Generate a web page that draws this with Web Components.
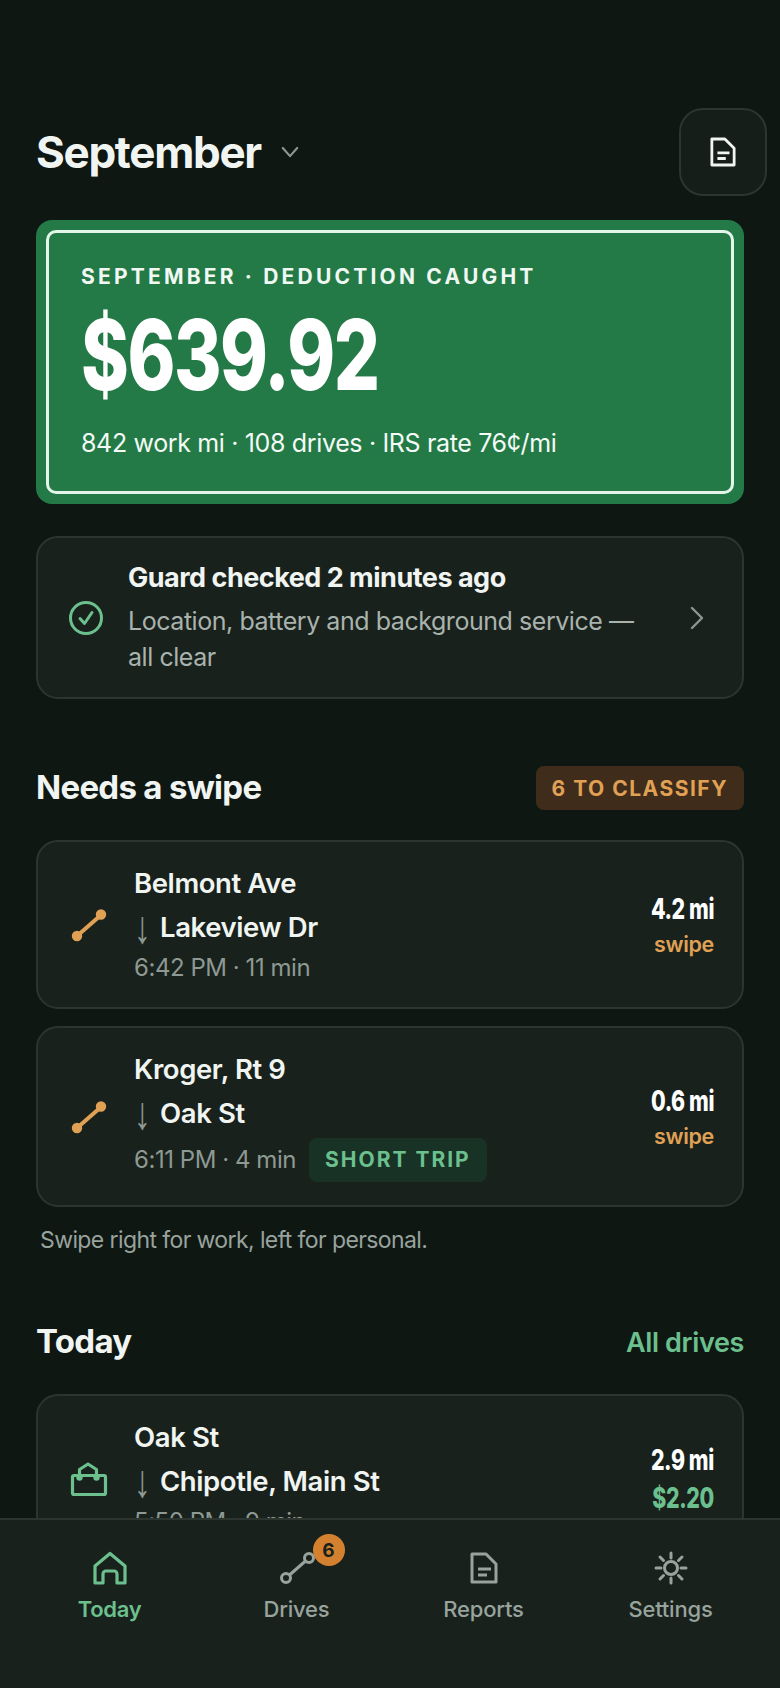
<!DOCTYPE html>
<html lang="en">
<head>
<meta charset="utf-8">
<title>Today</title>
<style>
  html, body { margin: 0; height: 100%; background: #0f1713; }
  body {
    font-family: Inter, "Liberation Sans", Arial, sans-serif;
    color: #f1f5f2;
  }
</style>
</head>
<body>

<app-shell>
  <month-header month="September"></month-header>
  <hero-card label="SEPTEMBER · DEDUCTION CAUGHT" amount="$639.92" detail="842 work mi · 108 drives · IRS rate 76¢/mi"></hero-card>
  <guard-card title="Guard checked 2 minutes ago">Location, battery and background service — all clear</guard-card>

  <section-head heading="Needs a swipe" style="margin-top:67px">
    <tag-chip slot="aside" tone="amber" big>6 TO CLASSIFY</tag-chip>
  </section-head>
  <drive-row from="Belmont Ave" to="Lakeview Dr" when="6:42 PM · 11 min" miles="4.2 mi" value="swipe" icon="route" style="margin-top:30px"></drive-row>
  <drive-row from="Kroger, Rt 9" to="Oak St" when="6:11 PM · 4 min" miles="0.6 mi" value="swipe" icon="route" style="margin-top:17px">
    <tag-chip slot="tag" tone="green">SHORT TRIP</tag-chip>
  </drive-row>
  <hint-line>Swipe right for work, left for personal.</hint-line>

  <section-head heading="Today" style="margin-top:64px">
    <text-link slot="aside">All drives</text-link>
  </section-head>
  <drive-row from="Oak St" to="Chipotle, Main St" when="5:50 PM · 9 min" miles="2.9 mi" value="$2.20" tone="green" icon="work" style="margin-top:30px"></drive-row>

  <tab-bar slot="bar">
    <tab-item label="Today" icon="home" active></tab-item>
    <tab-item label="Drives" icon="drives" badge="6"></tab-item>
    <tab-item label="Reports" icon="doc"></tab-item>
    <tab-item label="Settings" icon="sun"></tab-item>
  </tab-bar>
</app-shell>

<script>
// Icons, all drawn in their own viewBox and coloured by currentColor
const ICONS = {
  doc: `<svg viewBox="0 0 28 32" width="28" height="32" fill="none" stroke="currentColor" stroke-width="3" stroke-linejoin="round"><path d="M2 2h14l10 10v18H2z"/><path d="M8 17h13M8 23h9"/></svg>`,
  chevron: `<svg viewBox="0 0 20 14" width="20" height="14" fill="none" stroke="currentColor" stroke-width="2.400" stroke-linecap="round" stroke-linejoin="round"><path d="M2 2l8 9 8-9"/></svg>`,
  check: `<svg viewBox="0 0 36 36" width="36" height="36" fill="none" stroke="currentColor" stroke-width="3" stroke-linecap="round" stroke-linejoin="round"><circle cx="18" cy="18" r="15.500"/><path d="M12 18.500l4.500 5 7.500-11"/></svg>`,
  right: `<svg viewBox="0 0 14 24" width="14" height="24" fill="none" stroke="currentColor" stroke-width="2.400" stroke-linecap="round" stroke-linejoin="round"><path d="M2 2l10 10L2 22"/></svg>`,
  route: `<svg viewBox="0 0 38 34" width="38" height="34" fill="currentColor" stroke="currentColor" stroke-width="4" stroke-linecap="round"><path d="M7 28L31 7" fill="none"/><circle cx="7" cy="28" r="3.200"/><circle cx="31" cy="6.500" r="3.200"/></svg>`,
  work: `<svg viewBox="0 0 38 36" width="38" height="36" fill="none" stroke="currentColor" stroke-width="3.200" stroke-linejoin="round"><rect x="2.500" y="14.500" width="33" height="19" rx="1.500"/><path d="M9.500 16V8.500L18 3l8.500 5.500V16"/><circle cx="9.500" cy="16.500" r="3.200" fill="currentColor" stroke="none"/><circle cx="26.500" cy="16.500" r="3.200" fill="currentColor" stroke="none"/></svg>`,
  home: `<svg viewBox="0 0 36 34" width="36" height="34" fill="none" stroke="currentColor" stroke-width="3.200" stroke-linejoin="round"><path d="M3 15L18 2.500 33 15v17h-8V23a3 3 0 0 0-3-3h-8a3 3 0 0 0-3 3v9H3z"/></svg>`,
  drives: `<svg viewBox="0 0 36 34" width="36" height="34" fill="none" stroke="currentColor" stroke-width="3"><circle cx="7" cy="27" r="4.500"/><circle cx="30" cy="7" r="4.500"/><path d="M10.500 24L26.500 10"/></svg>`,
  sun: `<svg viewBox="0 0 36 36" width="36" height="36" fill="none" stroke="currentColor" stroke-width="3" stroke-linecap="round"><circle cx="18" cy="18" r="6.500"/><path d="M18 3v5M18 28v5M3 18h5M28 18h5M7 7l3.500 3.500M25.500 25.500L29 29M7 29l3.500-3.500M25.500 10.500L29 7"/></svg>`
};

class AppShell extends HTMLElement {
  constructor() {
    super();
    this.attachShadow({ mode: "open" });
    this.shadowRoot.innerHTML = `
    <style>
      :host { display: flex; flex-direction: column; height: 1688px; overflow: hidden; }
      .content { flex: 1; min-height: 0; overflow: hidden; padding: 108px 36px 0; display: flex; flex-direction: column; }
      .content ::slotted(*) { flex: none; }
    </style>
    <div class="content"><slot></slot></div>
    <slot name="bar"></slot>`;
  }
}
customElements.define("app-shell", AppShell);

class MonthHeader extends HTMLElement {
  constructor() {
    super();
    this.attachShadow({ mode: "open" });
    this.shadowRoot.innerHTML = `
    <style>
      :host { display: flex; align-items: center; height: 88px; margin-right: -23px; }
      h1 { margin: 0; font-size: 44px; line-height: 88px; font-weight: 700; letter-spacing: -1.300px; color: #f1f5f2; }
      .chev { display: flex; margin-left: 20px; color: #8c9791; }
      .chev svg { width: 18px; height: 13px; }
      button {
        margin-left: auto; width: 88px; height: 88px; box-sizing: border-box; padding: 0;
        display: grid; place-items: center;
        background: #161e1a; border: 2px solid #2c3530; border-radius: 24px; color: #f1f5f2;
      }
      button svg { width: 26px; height: 30px; }
    </style>
    <h1></h1>
    <span class="chev">${ICONS.chevron}</span>
    <button aria-label="Reports">${ICONS.doc}</button>`;
    this.shadowRoot.querySelector("h1").textContent = this.getAttribute("month");
  }
}
customElements.define("month-header", MonthHeader);

class HeroCard extends HTMLElement {
  constructor() {
    super();
    this.attachShadow({ mode: "open" });
    this.shadowRoot.innerHTML = `
    <style>
      :host { display: block; margin-top: 24px; padding: 10px; background: #237a47; border-radius: 16px; }
      .inner { height: 264px; box-sizing: border-box; padding: 30px 32px 0; border: 3px solid #e4f5ea; border-radius: 10px; color: #fff; }
      .label { font-size: 21px; line-height: 28px; font-weight: 700; letter-spacing: 3.200px; color: #f1f8f3; white-space: nowrap; }
      .amount {
        margin-top: 12px; font-size: 98px; line-height: 104px; font-weight: 800; letter-spacing: -2px;
        transform: scaleX(.74); transform-origin: left center; white-space: nowrap;
      }
      .detail { margin-top: 19px; font-size: 25px; line-height: 34px; letter-spacing: -.35px; color: #f4faf6; white-space: nowrap; }
    </style>
    <div class="inner">
      <div class="label"></div>
      <div class="amount"></div>
      <div class="detail"></div>
    </div>`;
    for (const k of ["label", "amount", "detail"]) {
      this.shadowRoot.querySelector("." + k).textContent = this.getAttribute(k);
    }
  }
}
customElements.define("hero-card", HeroCard);

class GuardCard extends HTMLElement {
  constructor() {
    super();
    this.attachShadow({ mode: "open" });
    this.shadowRoot.innerHTML = `
    <style>
      :host {
        display: flex; align-items: center; margin-top: 32px; height: 163px; box-sizing: border-box;
        padding: 0 38px 0 30px; background: #19211c; border: 2px solid #2c3530; border-radius: 22px;
      }
      .ic { display: flex; color: #6cc08e; margin-right: 24px; }
      .txt { flex: 1; min-width: 0; }
      .t { font-size: 27px; line-height: 36px; font-weight: 700; letter-spacing: -.5px; color: #f1f5f2; margin-bottom: 7px; }
      .s { font-size: 25px; line-height: 36px; letter-spacing: -.45px; color: #a9b3ad; max-width: 520px; }
      .go { display: flex; color: #8c9791; margin-left: 20px; }
    </style>
    <span class="ic">${ICONS.check}</span>
    <div class="txt"><div class="t"></div><div class="s"><slot></slot></div></div>
    <span class="go">${ICONS.right}</span>`;
    this.shadowRoot.querySelector(".t").textContent = this.getAttribute("title");
    this.removeAttribute("title");
  }
}
customElements.define("guard-card", GuardCard);

class SectionHead extends HTMLElement {
  constructor() {
    super();
    this.attachShadow({ mode: "open" });
    this.shadowRoot.innerHTML = `
    <style>
      :host { display: flex; align-items: center; justify-content: space-between; height: 44px; }
      h2 { margin: 0 0 2px; font-size: 33px; line-height: 42px; font-weight: 700; letter-spacing: -.7px; color: #f1f5f2; }
    </style>
    <h2></h2>
    <slot name="aside"></slot>`;
    this.shadowRoot.querySelector("h2").textContent = this.getAttribute("heading");
  }
}
customElements.define("section-head", SectionHead);

class TagChip extends HTMLElement {
  constructor() {
    super();
    this.attachShadow({ mode: "open" });
    this.shadowRoot.innerHTML = `
    <style>
      :host {
        display: inline-flex; align-items: center; height: 44px; padding: 0 16px; box-sizing: border-box; border-radius: 8px;
        font-size: 21px; font-weight: 700; letter-spacing: 2px; white-space: nowrap;
        background: #183226; color: #6cc08e;
      }
      :host([tone="amber"]) { background: #3f2c1b; color: #e0a155; letter-spacing: 1.500px; }
    </style>
    <slot></slot>`;
  }
}
customElements.define("tag-chip", TagChip);

class TextLink extends HTMLElement {
  constructor() {
    super();
    this.attachShadow({ mode: "open" });
    this.shadowRoot.innerHTML = `
    <style>
      :host { display: inline-block; font-size: 27px; font-weight: 600; letter-spacing: -.35px; color: #6cc08e; }
    </style>
    <slot></slot>`;
  }
}
customElements.define("text-link", TextLink);

class DriveRow extends HTMLElement {
  constructor() {
    super();
    this.attachShadow({ mode: "open" });
    const get = (k) => this.getAttribute(k) || "";
    this.shadowRoot.innerHTML = `
    <style>
      :host {
        display: flex; align-items: center; box-sizing: border-box; padding: 23px 28px 23px 32px;
        background: #19211c; border: 2px solid #2c3530; border-radius: 22px;
      }
      .ic { display: flex; width: 38px; margin-right: 26px; flex: none; color: #e0a155; }
      :host([icon="work"]) .ic { color: #6cc08e; }
      .mid { flex: 1; min-width: 0; }
      .name { font-size: 27.500px; line-height: 36px; font-weight: 600; letter-spacing: -.4px; color: #f1f5f2; white-space: nowrap; }
      .to { margin-top: 8px; display: flex; }
      .arrow { width: 26px; font-family: "Liberation Sans", sans-serif; font-weight: 400; color: #8d9992; font-size: 34px; }
      .arrow i { display: inline-block; font-style: normal; transform: scale(1, 1.350); transform-origin: center; }
      .meta { margin-top: 7px; min-height: 32px; display: flex; align-items: center; gap: 13px; font-size: 24px; line-height: 32px; letter-spacing: -.45px; color: #8d9992; white-space: nowrap; }
      .end { text-align: right; flex: none; }
      .miles { font-size: 28px; line-height: 36px; font-weight: 800; color: #fff; display: inline-block; transform: scaleX(.76); transform-origin: right center; letter-spacing: -.5px; }
      .val { font-size: 21.500px; line-height: 30px; font-weight: 600; color: #e0a155; margin-top: 2px; letter-spacing: -.3px; }
      :host([tone="green"]) .val { color: #6cc08e; font-size: 28px; line-height: 36px; font-weight: 800; transform: scaleX(.76); transform-origin: right center; letter-spacing: -.5px; }
    </style>
    <span class="ic">${ICONS[get("icon")] || ""}</span>
    <div class="mid">
      <div class="name">${get("from")}</div>
      <div class="name to"><span class="arrow"><i>↓</i></span><span>${get("to")}</span></div>
      <div class="meta"><span>${get("when")}</span><slot name="tag"></slot></div>
    </div>
    <div class="end">
      <div class="miles">${get("miles")}</div>
      <div class="val">${get("value")}</div>
    </div>`;
  }
}
customElements.define("drive-row", DriveRow);

class HintLine extends HTMLElement {
  constructor() {
    super();
    this.attachShadow({ mode: "open" });
    this.shadowRoot.innerHTML = `
    <style>
      :host { display: block; margin-top: 17px; padding-left: 4px; font-size: 23px; line-height: 32px; letter-spacing: -.6px; color: #98a39d; }
    </style>
    <slot></slot>`;
  }
}
customElements.define("hint-line", HintLine);

class TabBar extends HTMLElement {
  constructor() {
    super();
    this.attachShadow({ mode: "open" });
    this.shadowRoot.innerHTML = `
    <style>
      :host {
        display: grid; grid-template-columns: repeat(4, 1fr); flex: none; position: relative;
        height: 170px; box-sizing: border-box; padding: 30px 16px 0;
        background: #19211c; border-top: 2px solid #2c3530;
      }
    </style>
    <slot></slot>`;
  }
}
customElements.define("tab-bar", TabBar);

class TabItem extends HTMLElement {
  constructor() {
    super();
    this.attachShadow({ mode: "open" });
    const badge = this.getAttribute("badge");
    this.shadowRoot.innerHTML = `
    <style>
      :host { display: flex; flex-direction: column; align-items: center; color: #98a39d; }
      :host([active]) { color: #6cc08e; }
      .ic { position: relative; height: 36px; display: grid; place-items: center; }
      .badge {
        position: absolute; left: 34px; top: -16px; width: 32px; height: 32px; border-radius: 50%;
        display: grid; place-items: center; background: #d4812f; color: #19211c;
        font-size: 19px; font-weight: 700;
      }
      .label { margin-top: 7px; font-size: 22px; line-height: 32px; letter-spacing: -.2px; font-weight: 500; }
      :host([active]) .label { font-weight: 600; letter-spacing: -.3px; }
    </style>
    <span class="ic">${ICONS[this.getAttribute("icon")]}${badge ? `<span class="badge">${badge}</span>` : ""}</span>
    <span class="label">${this.getAttribute("label")}</span>`;
  }
}
customElements.define("tab-item", TabItem);
</script>
</body>
</html>
